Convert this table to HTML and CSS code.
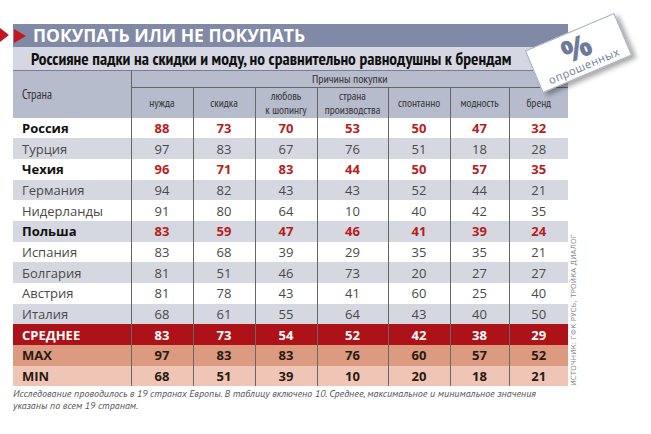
FILE: index.html
```html
<!DOCTYPE html>
<html lang="ru">
<head>
<meta charset="utf-8">
<link rel="stylesheet" href="styles.css">
</head>
<body>
<div class="page">
  <div class="title-row">
    <svg class="arrow-out" width="13" height="23" viewBox="0 0 13 23"><polygon points="0,4 9,11 0,18" fill="#c4161c"/></svg>
    <div class="title">
      <svg class="arrow-in" width="12" height="14" viewBox="0 0 12 14"><polygon points="0,0 12,7 0,14" fill="#c4161c"/></svg>
      <h1>ПОКУПАТЬ ИЛИ НЕ ПОКУПАТЬ</h1>
    </div>
  </div>
  <div class="content">
    <div class="subtitle">Россияне падки на скидки и моду, но сравнительно равнодушны к брендам</div>
    <div class="table-row">
      <table class="data">
        <colgroup>
          <col class="c-country"><col class="c-n"><col class="c-n"><col class="c-n"><col class="c-w"><col class="c-n"><col class="c-s"><col class="c-s">
        </colgroup>
        <thead>
          <tr class="h1">
            <th rowspan="2" class="country-h">Страна</th>
            <th colspan="7" class="group-h">Причины покупки</th>
          </tr>
          <tr class="h2">
            <th>нужда</th><th>скидка</th><th>любовь<br>к шопингу</th><th>страна<br>производства</th><th>спонтанно</th><th>модность</th><th>бренд</th>
          </tr>
        </thead>
        <tbody>
          <tr class="hl"><td>Россия</td><td>88</td><td>73</td><td>70</td><td>53</td><td>50</td><td>47</td><td>32</td></tr>
          <tr class="alt"><td>Турция</td><td>97</td><td>83</td><td>67</td><td>76</td><td>51</td><td>18</td><td>28</td></tr>
          <tr class="hl"><td>Чехия</td><td>96</td><td>71</td><td>83</td><td>44</td><td>50</td><td>57</td><td>35</td></tr>
          <tr class="alt"><td>Германия</td><td>94</td><td>82</td><td>43</td><td>43</td><td>52</td><td>44</td><td>21</td></tr>
          <tr><td>Нидерланды</td><td>91</td><td>80</td><td>64</td><td>10</td><td>40</td><td>42</td><td>35</td></tr>
          <tr class="hl alt"><td>Польша</td><td>83</td><td>59</td><td>47</td><td>46</td><td>41</td><td>39</td><td>24</td></tr>
          <tr><td>Испания</td><td>83</td><td>68</td><td>39</td><td>29</td><td>35</td><td>35</td><td>21</td></tr>
          <tr class="alt"><td>Болгария</td><td>81</td><td>51</td><td>46</td><td>73</td><td>20</td><td>27</td><td>27</td></tr>
          <tr><td>Австрия</td><td>81</td><td>78</td><td>43</td><td>41</td><td>60</td><td>25</td><td>40</td></tr>
          <tr class="alt"><td>Италия</td><td>68</td><td>61</td><td>55</td><td>64</td><td>43</td><td>40</td><td>50</td></tr>
          <tr class="avg"><td>СРЕДНЕЕ</td><td>83</td><td>73</td><td>54</td><td>52</td><td>42</td><td>38</td><td>29</td></tr>
          <tr class="max"><td>MAX</td><td>97</td><td>83</td><td>83</td><td>76</td><td>60</td><td>57</td><td>52</td></tr>
          <tr class="min"><td>MIN</td><td>68</td><td>51</td><td>39</td><td>10</td><td>20</td><td>18</td><td>21</td></tr>
        </tbody>
      </table>
      <div class="source">ИСТОЧНИК: ГФК РУСЬ, ТРОЙКА ДИАЛОГ</div>
    </div>
    <p class="note">Исследование проводилось в 19 странах Европы. В таблицу включено 10. Среднее, максимальное и минимальное значения<br>указаны по всем 19 странам.</p>
  </div>
  <div class="badge">
    <span class="pct">%</span>
    <span class="resp">опрошенных</span>
  </div>
</div>
</body>
</html>
```

FILE: styles.css
```css
* { box-sizing: border-box; }
html, body { margin: 0; padding: 0; background: #fff; }
.page {
  position: relative;
  width: 651px;
  height: 434px;
  padding-top: 24px;
  font-family: "Open Sans", "Noto Sans", sans-serif;
}
.title-row {
  display: flex;
  align-items: flex-start;
}
.arrow-out { display: block; flex: none; }
.title {
  width: 555px;
  height: 23px;
  background: #8089a6;
  display: flex;
  align-items: center;
  padding-left: 1px;
}
.arrow-in { display: block; flex: none; }
.title h1 {
  margin: 0 0 0 7px;
  color: #fff;
  font-family: "Open Sans", sans-serif;
  font-weight: 700;
  font-size: 17.5px;
  letter-spacing: 0;
  line-height: 23px;
}
.content { margin-left: 13px; width: 570px; }
.subtitle {
  width: 555px;
  height: 23px;
  background: #d5d8e2;
  color: #111;
  font-family: "PT Sans Narrow", "Roboto Condensed", sans-serif;
  font-weight: 700;
  font-size: 17.4px;
  line-height: 23px;
  padding-left: 18px;
  white-space: nowrap;
}
.table-row {
  display: flex;
  align-items: flex-end;
  gap: 2px;
}
.data {
  width: 555px;
  flex: none;
  table-layout: fixed;
  border-collapse: collapse;
  border-top: 1px solid #7a7f90;
}
.c-country { width: 118px; }
.c-n { width: 62px; }
.c-w { width: 71px; }
.c-s { width: 59px; }
.data th {
  background: #b7bccd;
  color: #333;
  font-family: "PT Sans Narrow", "Roboto Condensed", sans-serif;
  font-weight: 400;
  font-size: 11.5px;
  line-height: 14px;
  padding: 0;
  text-align: center;
  vertical-align: middle;
}
.data .h1 { height: 17px; }
.data .h2 { height: 30px; }
.data .country-h {
  text-align: left;
  padding-left: 9px;
  border-right: 1px solid #666;
  font-size: 12.5px;
}
.data .group-h { border-bottom: 1px solid #666; font-size: 12px; }
.data .h2 th + th { border-left: 1px solid #666; }
.data td {
  height: 20.7px;
  padding: 0;
  text-align: center;
  font-size: 13px;
  line-height: 16px;
  color: #4a4a4a;
  background: #fff;
}
.data td + td { border-left: 1px solid #666; }
.data td:first-child { text-align: left; padding-left: 9px; }
.data tr.alt td { background: #d5d8e1; }
.data tr.hl td { font-weight: 700; color: #b81d1d; }
.data tr.hl td:first-child { color: #111; }
.data tr.avg td { background: #ad1218; color: #fff; font-weight: 700; }
.data tr.max td { background: #dc9a80; color: #2a1a14; font-weight: 700; }
.data tr.min td { background: #efc6b5; color: #2a1a14; font-weight: 700; }
.source {
  writing-mode: vertical-rl;
  transform: rotate(180deg);
  font-family: "DejaVu Sans", sans-serif;
  font-size: 7px;
  letter-spacing: 0.15px;
  color: #888;
  line-height: 8px;
  padding-top: 1px;
}
.note {
  margin: 2px 0 0 0;
  font-family: "PT Sans", "Open Sans", sans-serif;
  font-style: italic;
  font-size: 10px;
  line-height: 12px;
  letter-spacing: 0;
  color: #555;
  white-space: nowrap;
}
.badge {
  position: absolute;
  left: 530px;
  top: 30px;
  width: 97px;
  height: 46px;
  background: #fff;
  border: 1.5px solid #a3aac4;
  box-shadow: 3px 4px 5px rgba(0,0,0,0.35);
  transform: rotate(-23deg);
  display: flex;
  flex-direction: column;
  align-items: center;
  justify-content: center;
}
.badge .pct {
  font-family: "Open Sans", sans-serif;
  font-weight: 800;
  font-size: 31px;
  line-height: 26px;
  color: #6f799a;
}
.badge .resp {
  font-family: "Open Sans", sans-serif;
  font-size: 11px;
  line-height: 13px;
  letter-spacing: 0.5px;
  color: #6f799a;
}
```
